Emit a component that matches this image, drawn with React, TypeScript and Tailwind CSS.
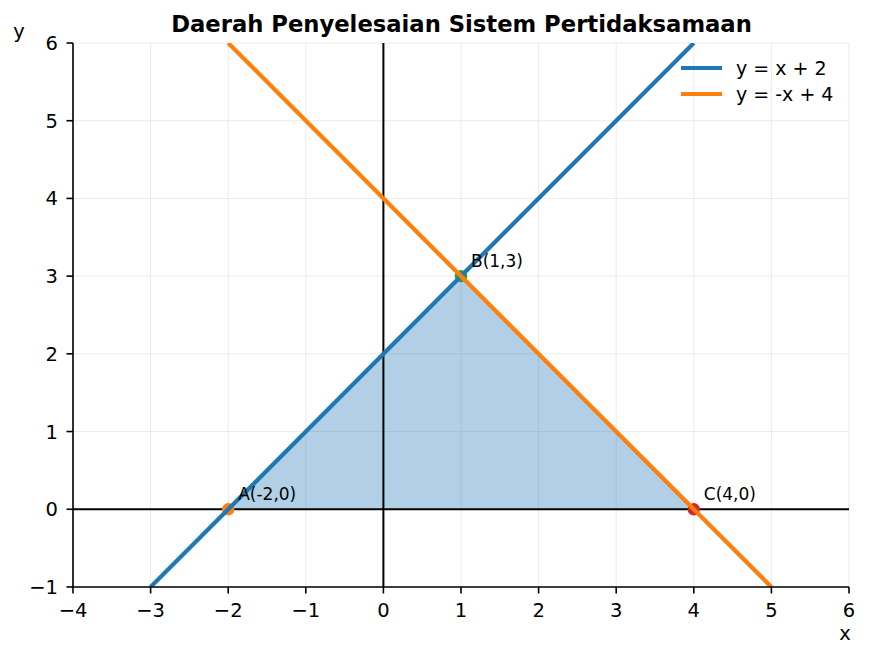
const X0 = 73;
const Y0 = 43;
const SX = 77.6;
const SY = 77.71;

const px = (x: number) => X0 + (x + 4) * SX;
const py = (y: number) => Y0 + (6 - y) * SY;

const xTicks = [-4, -3, -2, -1, 0, 1, 2, 3, 4, 5, 6];
const yTicks = [-1, 0, 1, 2, 3, 4, 5, 6];

const fmt = (n: number) => (n < 0 ? `\u2212${Math.abs(n)}` : `${n}`);

const points = [
  { x: -2, y: 0, label: 'A(-2,0)', color: '#ff7f0e' },
  { x: 1, y: 3, label: 'B(1,3)', color: '#2ca02c' },
  { x: 4, y: 0, label: 'C(4,0)', color: '#d62728' },
];

function Chart() {
  const right = px(6);
  const bottom = py(-1);

  return (
    <svg width={869} height={657} viewBox="0 0 869 657" className="block">
      <defs>
        <clipPath id="axes">
          <rect x={X0} y={Y0} width={right - X0} height={bottom - Y0} />
        </clipPath>
      </defs>

      {/* grid */}
      <g stroke="#ebebeb" strokeWidth={1}>
        {xTicks.map((t) => (
          <line key={`gx${t}`} x1={px(t)} y1={Y0} x2={px(t)} y2={bottom} />
        ))}
        {yTicks.map((t) => (
          <line key={`gy${t}`} x1={X0} y1={py(t)} x2={right} y2={py(t)} />
        ))}
      </g>

      {/* feasible region */}
      <polygon
        points={points.map((p) => `${px(p.x)},${py(p.y)}`).join(' ')}
        fill="#1f77b4"
        fillOpacity={0.35}
      />

      {/* axis lines through origin */}
      <line x1={X0} y1={py(0)} x2={right} y2={py(0)} stroke="#000" strokeWidth={2} />
      <line x1={px(0)} y1={Y0} x2={px(0)} y2={bottom} stroke="#000" strokeWidth={2} />

      {/* vertices */}
      {points.map((p) => (
        <circle key={p.label} cx={px(p.x)} cy={py(p.y)} r={6.2} fill={p.color} />
      ))}

      {/* boundary lines */}
      <g clipPath="url(#axes)" strokeWidth={4.2} strokeLinecap="butt">
        <line x1={px(-3)} y1={py(-1)} x2={px(4)} y2={py(6)} stroke="#1f77b4" />
        <line x1={px(-2)} y1={py(6)} x2={px(5)} y2={py(-1)} stroke="#ff7f0e" />
      </g>

      {/* spines */}
      <g stroke="#000" strokeWidth={1.6}>
        <line x1={X0} y1={Y0} x2={X0} y2={bottom + 0.8} />
        <line x1={X0 - 0.8} y1={bottom} x2={right} y2={bottom} />
        {xTicks.map((t) => (
          <line key={`tx${t}`} x1={px(t)} y1={bottom} x2={px(t)} y2={bottom + 6.5} />
        ))}
        {yTicks.map((t) => (
          <line key={`ty${t}`} x1={X0} y1={py(t)} x2={X0 - 6.5} y2={py(t)} />
        ))}
      </g>

      <g fontFamily="'DejaVu Sans', sans-serif" fill="#000">
        {xTicks.map((t) => (
          <text key={`lx${t}`} x={px(t)} y={616.5} fontSize={19.5} textAnchor="middle">
            {fmt(t)}
          </text>
        ))}
        {yTicks.map((t) => (
          <text key={`ly${t}`} x={58} y={py(t) + 7} fontSize={19.5} textAnchor="end">
            {fmt(t)}
          </text>
        ))}

        {points.map((p) => (
          <text key={`pl${p.label}`} x={px(p.x) + 10} y={py(p.y) - 9} fontSize={17}>
            {p.label}
          </text>
        ))}

        <text x={461.5} y={32} fontSize={22.7} fontWeight="bold" textAnchor="middle">
          Daerah Penyelesaian Sistem Pertidaksamaan
        </text>
        <text x={19} y={38} fontSize={19.5} textAnchor="middle">
          y
        </text>
        <text x={845} y={640} fontSize={19.5} textAnchor="middle">
          x
        </text>

        {/* legend */}
        <line x1={681} y1={68} x2={722} y2={68} stroke="#1f77b4" strokeWidth={4.2} />
        <line x1={681} y1={94} x2={722} y2={94} stroke="#ff7f0e" strokeWidth={4.2} />
        <text x={736} y={75} fontSize={19}>
          y = x + 2
        </text>
        <text x={736} y={101} fontSize={19}>
          y = -x + 4
        </text>
      </g>
    </svg>
  );
}

export default function App() {
  return (
    <div className="w-[869px] h-[657px] bg-white overflow-hidden">
      <Chart />
    </div>
  );
}
